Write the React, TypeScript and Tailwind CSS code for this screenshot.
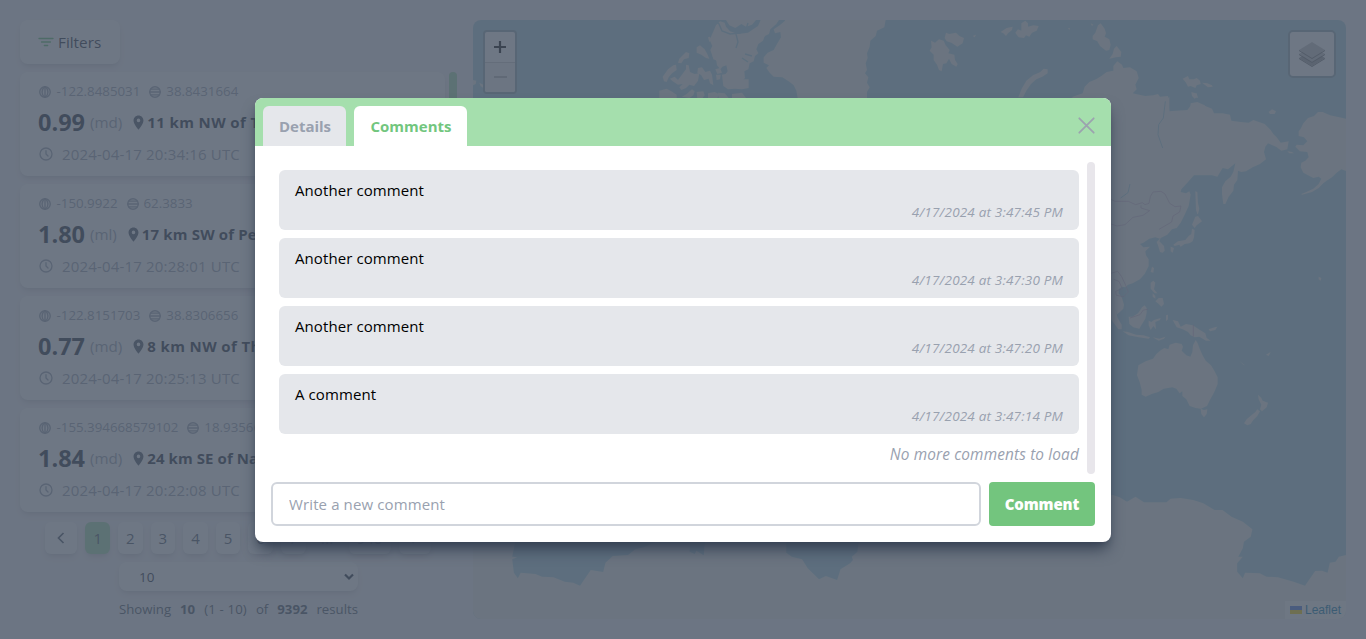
import React from 'react';
import { TbWorldLongitude, TbWorldLatitude, TbClock } from 'react-icons/tb';
import { MdLocationOn } from 'react-icons/md';

const quakes = [
  { lon: '-122.8485031', lat: '38.8431664', mag: '0.99', type: '(md)', place: '11 km NW of The', time: '2024-04-17 20:34:16 UTC', tracking: 'tracking-[0.38px]' },
  { lon: '-150.9922', lat: '62.3833', mag: '1.80', type: '(ml)', place: '17 km SW of Pete', time: '2024-04-17 20:28:01 UTC', tracking: 'tracking-[0.15px]' },
  { lon: '-122.8151703', lat: '38.8306656', mag: '0.77', type: '(md)', place: '8 km NW of The', time: '2024-04-17 20:25:13 UTC', tracking: 'tracking-[0.38px]' },
  { lon: '-155.394668579102', lat: '18.9356670', mag: '1.84', type: '(md)', place: '24 km SE of Naal', time: '2024-04-17 20:22:08 UTC', tracking: 'tracking-[0.08px]' },
];

const comments = [
  { text: 'Another comment', date: '4/17/2024 at 3:47:45 PM' },
  { text: 'Another comment', date: '4/17/2024 at 3:47:30 PM' },
  { text: 'Another comment', date: '4/17/2024 at 3:47:20 PM' },
  { text: 'A comment', date: '4/17/2024 at 3:47:14 PM' },
];

function FilterIcon() {
  return (
    <svg className="h-4 w-4" viewBox="0 0 16 16" fill="none" stroke="#5fc06d" strokeWidth="1.3" strokeLinecap="round">
      <path d="M1 4.5h14M3.5 8h9M6.3 11.5h3.4" />
    </svg>
  );
}

function Card({ q }: { q: (typeof quakes)[number] }) {
  return (
    <div className="flex h-[104px] shrink-0 flex-col justify-between overflow-hidden whitespace-nowrap rounded-lg bg-white px-[18px] pt-[11px] pb-[10px] shadow-md">
      <div className="flex h-[18px] items-center text-[13.3px] text-gray-400">
        <TbWorldLongitude className="mr-[4.5px] h-[14px] w-[14px]" strokeWidth={2.4} />
        <span>{q.lon}</span>
        <TbWorldLatitude className="mr-1 ml-2 h-[14px] w-[14px]" strokeWidth={2.4} />
        <span>{q.lat}</span>
      </div>
      <div className="mt-0.5 flex h-8 items-center text-[15px]">
        <span className="w-[47px] text-[23.5px] font-bold text-gray-800">{q.mag}</span>
        <span className="ml-[5px] text-[15.2px] text-gray-400">{q.type}</span>
        <MdLocationOn className="ml-2 h-[17px] w-[17px] text-gray-600" />
        <span className={`font-bold text-gray-800 ${q.tracking}`}>{q.place}</span>
      </div>
      <div className="flex h-6 items-center text-[15px] tracking-[0.17px] text-gray-400">
        <TbClock className="mr-2 h-4 w-4" />
        <span>{q.time}</span>
      </div>
    </div>
  );
}

const pageBtn = 'flex h-8 items-center justify-center rounded-md shadow-md text-[15px] text-gray-600';

function WorldMap() {
  return (
    <svg className="block h-full w-full" viewBox="473 20 873 599" preserveAspectRatio="none">
      <rect x="473" y="20" width="873" height="599" fill="#aad3df" />
      <g fill="#eef0e9">
        <g transform="translate(470 0) scale(.33333)">
          <path d="M738 76l12-12 14 4 4 12 12 14 24 8 30-4 12-8 18-12 8-18h55l-8 12-18 16-4 14-12 6-6 14-14 10-6 16 6 12-10 8-4 16-12 6-4 18-12 6 2 20-8 8-30 0-16-4-10-8 12-16-4-18-12 4-6 8-10-12-2-14-10-10-8-22 6-12-8-18z" />
          <path d="M768 60h90l-12 14-18 6-14-8-18 12-18-8z" />
          <path d="M945 60h302l-4 22-22 10-4 16-16 14-2 18-8 20 2 14-6 16 4 20-6 10 10 12-4 16 8 14-8 14 0 18H983l-4-22-8-16-12-10-22-14-26-2-12-12-10-14 8-8-16-8 0-16 12-14 18-8 10-18 12-20-2-16-16 4-4-12 18-12 16-14z" />
          <path d="M680 142l10-6 14 12 8 14 6 14-10-2-14-10-14-6zM636 168l12-12 10 4-2 14-14 4-8 12-10-2 4-12zM578 230l16-22 16-12 8-2 2 16-14 10-10 12-6 14-8-2zM600 236l14-6 10 10 16-22 8-10 0-14 8 2 4 20 14 6 14-2-4 22-12 16-14-4-10 10-14 6-6-8 10-10-14 2-16-10zM684 204l12-2 10 14 14-4 6 12 4 32-10-6-4-14-14 4-8-14-12-8zM724 154l10-2 12 16-4 14-12-4zM736 208l14-4 6 14-14 4zM738 224l14 0-2 14-10 2zM756 224l20-4 8 14 16-4 14 8 22 0 0 26-20 4-22-2-20 2-14-10zM768 188l8-4 6 14-6 10zM714 112l6-2 4 10-6 6zM568 272l22-6 14 8 16 10 0 14h-52zM636 290l14-8 16-14 8 6-4 12-12 8zM680 276l20-2 4 12-8 10h-14zM714 280l20-4 12 6-4 14h-28zM744 278l20 2 12 14h-30zM786 282l30-4 12 16h-42z" />
          <path d="M9 240l10 2-2 10-8 4zM28 248l12 6 0 10-8-6z" />
        </g>
        <path d="M714 20l5 4 3 7 8 3 10-1 6-4 2-6M736 34l2 8-2 6M748 62l-6-4M752 56l-7-2M770 40l-6-2" fill="none" stroke="#aad3df" strokeWidth="1.4" />
        <g transform="translate(900 0) scale(.33333)">
          <path d="M93 122l12 6 12-10 14 4 6 14 12 14-4 10 18 4 2 16 8 12-4 8-14-8-8-16-8 14-10 2-4 22-8-4-6-16-10-14 0-16-12-12 6-10zM138 98l10 4 20-4 10 10 14 6-4 16-16 10-18-12-14-4-6-10zM218 108l10-4-4 8zM302 96l18-12 18-4-2 10-12 10-6 8-8-8zM346 98l8-10 10 4 0-22 12-8 8 8 0 10 16-4 16 2-6 14-14 6-8 12-10-4-6 8-16-2-6-8zM572 70l8 4-4 4zM504 84l6 0-2 6zM594 76l8-6 12 16 4 14-4 10 14 8 4 16-4 16-10 2-18-14-8-14-14-6 0-10 8-10zM628 176l10-14 4-16 8-8 14 18-2 14-14 2zM355 292l10-26 14-24 20-16 22-10 10-10 12 2 0 12-16 10-18 8-16 14-14 20-10 20zM514 292l34-12 6-20 14-14 20-8 16-10 16-12 20-4 0-14 12-14 14 10 4 10 20-2 20 12 6 20-10 20 4 14-12 12 20 4 18 4 24-2 14-4 6 8 24-2 4 46H633z" />
          <path d="M848 236l16-8 4 10 14 0 8-4 10 8 2 10-12 4-4 8-14-6-8 2-6-12zM906 248l16 2 14 6 2 4-14 2zM874 276l12 4 6 10-8 6-8-8zM872 310l20-4 22 10 12 16h-56z" />
        </g>
        <g transform="translate(1100 90) scale(.33333)">
          <path d="M0 0h84l20 14 26 6 36-2 12 16 14 2 16-16 0 44 20-2 34-2 14-18 20 0 20 6 20 8 6 14 26 0 22 4 4 18 28 4 24 2 14-8 34 12 18 18 8 12 10 10 12 16 24-4-4 24-18 4-16-12-24-10-8 10-4 16 6 22-18 14-22 10-20 12-14 2-10-4-2 28-10 14-2 18-14 18-10 22-6 0-4-30 0-20 10-18 16-14 8-14 6-26-22 18-16-4-16 26-16-4-46 0-8 0-20 22-18 20-2 8 16 4 10-6 4 10-6 34-12 26-12 24-12 16-14 4-14 16-20 10-4 10 14 14 2 14-6 6-8-2-6-20-4-10 10-10-14-4-18 4-18 12-10 4 10 10 20-2-14 14 2 12 8 12 0 20-12 24-14 16-22 12-14 4-8 8-10-2-10 8 0 12 10 14 6 20-2 12-8 8-12 10-2-12-12-14-14-4-4-26z" />
          <path d="M286 304l6 2 2 34 4 16-4 16-2 0-4-12zM286 380l8-2 12 16-16 12-6 8-8-10zM276 416l8 4-2 22-4 12-10 6-14 2-12 8-4-6-14 4-4-4 14-10 22-4 10-12 8-6zM212 470l10 4-4 14-6-4zM152 546l4-16 6 4-2 14zM84 566l8-6 6 4-6 10zM152 578l8-6 6 6-4 20 10 12-8 0-12-14zM166 634l10-10 12 0 4 18-8 8-8-8zM158 610l8 8 0 8-8-6zM86 680l12 0 16-10 12-18 8-6 6 8 0 14-4 18-12 20-6 10-18-4-12-10zM33 636l12 18 8 30 12 20 0 14-10 0-22-30zM68 724l16 2 24 8 22 2 20 6-4 4-30-4-30-6zM146 692l8 4 8-6 20-6-2 6-14 6 2 22-8-10-8 12-6-14zM198 676l6-2 0 14-6 6zM218 690l16 4 8 16 16-8 20 4 22 14 16 10 4 14 12 8-14 0-20-12-14 2-12-6-8-10-16-8-18-6zM326 718l18-6 8-2-6 10-16 4zM158 742l20 4 18-6-4 6-16 6z" />
          <path d="M115 826l22-12 22-8 10-14 14-12 10-6 12 4 4-14 18-6 18 4 4 8-4 12 14 14 12 4 6-14 2-20 8-16 6 10 6 16 8 18 10 18 16 14 10 16 10 20 0 20-10 24-12 22-10 20-18 8-16-2-18-6-10-20-12-10 0-14-8 6-10-14-12-4-26 4-16 10-20 6-18 8-12-6 0-14-6-24-8-20zM302 956l10 4 10-2-2 14-8 10-8-10zM474 914l10 10 4 8 16 6-4 14-14 12-6-6 4-14-8-16zM472 958l8 6-8 14-12 12-8 12-10 4-10-6 8-12 14-12 12-10zM498 794l14-8-6 12zM420 814l14 12-4-2zM506 66l10-8 12 6-4 8-14 0zM278 10l12 0 4 14-14-4zM562 184l14 2 6 4-14 0zM656 560l8 4-2 8-6-4z" />
          <path d="M738 86l-20-4-28-6-22-10-14 0-12 12-18 6-14 16-8 16-6 8 0 14 16 4 10 12-12 12-20-2-4 6 14 14 22 2 4 16-10 10-12 6-2 14 8 16 14 8 16 8 16-4 8 6-8 16-16 14-26 12-10 4 2 2 30-8 20-12 14-14 10-8 16-10 14-14 14-10 16 6 14 2z" />
        </g>
        <g transform="translate(480 440) scale(.56505 .33333)">
          <path d="M1100 170L1120 165 1132 172 1145 185 1160 170 1175 187 1215 187 1222 176 1240 174 1262 180 1280 190 1300 210 1314 210 1330 230 1350 245 1367 268 1364 290 1352 305 1350 325 1342 350 1350 350 1340 370 1340 395 1350 415 1354 398 1380 400 1392 410 1412 412 1440 425 1460 437 1478 393 1490 392 1500 398 1504 368 1514 365 1520 350 1533 345V600H-20V290H64L57 350 66 352 57 358 60 398 67 415 72 398 98 402 110 410 130 412 150 425 165 428 177 437 196 390 218 396 222 368 235 348 262 345 275 328 290 322 310 306H372L371 335 380 342 383 332 396 346 398 306H542V338L552 350 570 358 580 385 600 418 612 408 632 420 638 388 655 370 660 360 658 350 668 335 670 306H1100Z" />
        </g>
      </g>
      <g transform="translate(1100 90) scale(.33333)" fill="none" stroke="#c9a9c6" strokeWidth="2">
        <path d="M33 328l12 6 40 0 22 10 20-6 8 6 12-4 4-20 8-14 24-2 12 8 14 28 16 10 18-2-4 18-20 12-4 18-38 22M123 346l0 8 26 8-20 14-30 6-24 22-24 4-18-6M33 550l20-6 12 16 12 26 8 20-14 14-22-4-2-12 20-8-10-22-16-6M90 684l30-10 10-14 14-2M280 704v36" />
        <path d="M196 34l-6 50-14 20-2 30 14 40M62 324l22-16 6-26" stroke="#aad3df" strokeWidth="3" />
      </g>
    </svg>
  );
}

export default function App() {
  return (
    <div className="relative flex h-[639px] w-[1366px] overflow-hidden bg-[#f5f3f7] p-5 font-['Open_Sans','Noto_Sans',sans-serif]">
      <section className="flex w-[437px] shrink-0 flex-col">
        <button className="flex h-11 w-[100px] shrink-0 items-center gap-1 rounded-lg bg-white pl-[18px] text-[15.3px] font-medium text-gray-800 shadow-md">
          <FilterIcon />
          <span>Filters</span>
        </button>
        <div className="mt-2 flex h-[440px] justify-between">
          <div className="flex w-[425px] flex-col gap-2">
            {quakes.map((q) => <Card key={q.mag} q={q} />)}
          </div>
          <div className="w-2 rounded-full bg-gray-200">
            <div className="h-20 rounded-full bg-[#a5dfad]" />
          </div>
        </div>
        <nav className="mt-[10px] flex w-[436px] items-center justify-center gap-2">
          <span className={`${pageBtn} w-8 bg-white`}>
            <svg className="h-4 w-4" viewBox="0 0 16 16" fill="none" stroke="currentColor" strokeWidth="1.7"><path d="M10.5 3L5.5 8l5 5" /></svg>
          </span>
          <span className={`${pageBtn} w-[24.6px] bg-[#a5dfad]`}>1</span>
          {['2', '3', '4', '5', '6', '7'].map((n) => <span key={n} className={`${pageBtn} w-[24.6px] bg-white`}>{n}</span>)}
          <span className="flex h-8 w-[27px] items-center justify-center text-gray-600">...</span>
          <span className={`${pageBtn} w-[42px] bg-white`}>940</span>
          <span className={`${pageBtn} w-8 bg-white`}>
            <svg className="h-4 w-4" viewBox="0 0 16 16" fill="none" stroke="currentColor" strokeWidth="1.7"><path d="M5.5 3l5 5-5 5" /></svg>
          </span>
        </nav>
        <div className="mt-2 ml-[99px] flex h-[29px] w-[239px] items-center justify-between rounded-lg bg-white pt-0.5 pr-[3px] pl-5 text-[13.5px] text-gray-800 shadow-md">
          <span>10</span>
          <svg className="mb-0.5 h-3 w-3" viewBox="0 0 12 12" fill="none" stroke="currentColor" strokeWidth="2.2"><path d="M2 3.5l4 4 4-4" /></svg>
        </div>
        <p className="mt-2 ml-[99px] flex w-[239px] justify-between whitespace-nowrap text-[13.2px] leading-5 text-gray-600">
          <span>Showing</span>
          <b>10</b>
          <span className="tracking-[0.15px]">(1 - 10)</span>
          <span>of</span>
          <b>9392</b>
          <span>results</span>
        </p>
      </section>

      <section className="relative ml-4 h-[599px] w-[873px] overflow-hidden rounded-lg">
        <WorldMap />
        <div className="absolute top-[10px] left-[10px] flex h-16 w-[34px] flex-col overflow-hidden rounded border-2 border-[#8fa9b2] bg-white">
          <span className="flex flex-1 items-center justify-center border-b border-[#ccc] text-black">
            <svg className="h-3 w-3" viewBox="0 0 12 12" stroke="currentColor" strokeWidth="2.2"><path d="M6 0v12M0 6h12" /></svg>
          </span>
          <span className="flex flex-1 items-center justify-center bg-[#f4f4f4] text-[#bbb]">
            <svg className="ml-px h-3 w-[13px]" viewBox="0 0 13 12" stroke="currentColor" strokeWidth="2"><path d="M0 6h13" /></svg>
          </span>
        </div>
        <div className="absolute top-[10px] right-[10px] flex h-12 w-12 items-center justify-center rounded-[5px] border-2 border-[#8fa9b2] bg-white">
          <svg className="h-[26px] w-[26px]" viewBox="0 0 26 26">
            <path d="m.03 17.06 13-8 13 8-13 8z" fill="#a0a0a0" />
            <path d="m.03 17.06-.03.93 13 8 13-8 .03-.93-13 8z" fill="#737373" />
            <path d="m0 13.08 13-8 13 8-13 8z" fill="#c0c0c0" />
            <path d="M0 13.08v.91l13 8 13-8v-.91l-13 8z" fill="#737373" />
            <path d="m0 8.99 13-8 13 8-13 8-13-8" fill="#c4c4c4" />
            <path d="M0 8.99v.91l13 8 13-8v-.91l-13 8z" fill="#737373" />
          </svg>
        </div>
        <div className="absolute right-0 bottom-0 flex h-[18px] items-center gap-[3px] bg-white/80 pr-[5px] pl-[5px] font-['Liberation_Sans',sans-serif] text-xs text-[#0078a8]">
          <svg className="h-2 w-3" viewBox="0 0 12 8"><path fill="#4c7be1" d="M0 0h12v4H0z" /><path fill="#ffd500" d="M0 4h12v4H0z" /></svg>
          <span>Leaflet</span>
        </div>
      </section>

      <div className="absolute inset-0 flex items-start justify-center bg-gray-600/80 pt-[98px]">
        <div className="flex h-[444px] w-[856px] flex-col overflow-hidden rounded-lg bg-white shadow-lg shadow-gray-700">
          <header className="flex h-12 shrink-0 items-end gap-2 bg-[#a5dfad] pl-2 text-[15px] font-bold">
            <div className="flex h-10 w-[83px] items-center justify-center rounded-t-md bg-gray-200 pl-px text-gray-400">Details</div>
            <div className="flex h-10 w-[113px] items-center justify-center rounded-t-md bg-white pl-px text-[#72c67e]">Comments</div>
            <svg className="mr-4 mb-3 ml-auto h-[17px] w-[17px]" viewBox="0 0 17 17" fill="none" stroke="#9ca3af" strokeWidth="1.8" strokeLinecap="round"><path d="M1.3 1.3l14.4 14.4M15.7 1.3L1.3 15.7" /></svg>
          </header>
          <div className="flex flex-1 flex-col p-4">
            <div className="flex h-[312px] gap-2 pl-2">
              <div className="flex flex-1 flex-col gap-2 pt-2">
                {comments.map((c) => (
                  <div key={c.date} className="flex h-[60px] flex-col rounded-md bg-gray-200 px-4 pt-2">
                    <p className="text-[15px] leading-6 tracking-[0.09px] text-black">{c.text}</p>
                    <p className="text-right text-[13.5px] leading-5 tracking-[0.18px] text-gray-400 italic">{c.date}</p>
                  </div>
                ))}
                <p className="pt-px text-right text-[15.4px] leading-6 tracking-[0.14px] text-gray-400 italic">No more comments to load</p>
              </div>
              <div className="w-2 rounded-full bg-[#e8e6eb]" />
            </div>
            <div className="mt-2 flex h-11 gap-2">
              <input className="w-[710px] rounded-md border-2 border-gray-300 px-4 text-[15px] tracking-[0.12px] outline-none placeholder:text-gray-400" placeholder="Write a new comment" />
              <button className="flex-1 rounded bg-[#73c57e] text-[15px] font-extrabold tracking-[-0.15px] text-white">Comment</button>
            </div>
          </div>
        </div>
      </div>
    </div>
  );
}
